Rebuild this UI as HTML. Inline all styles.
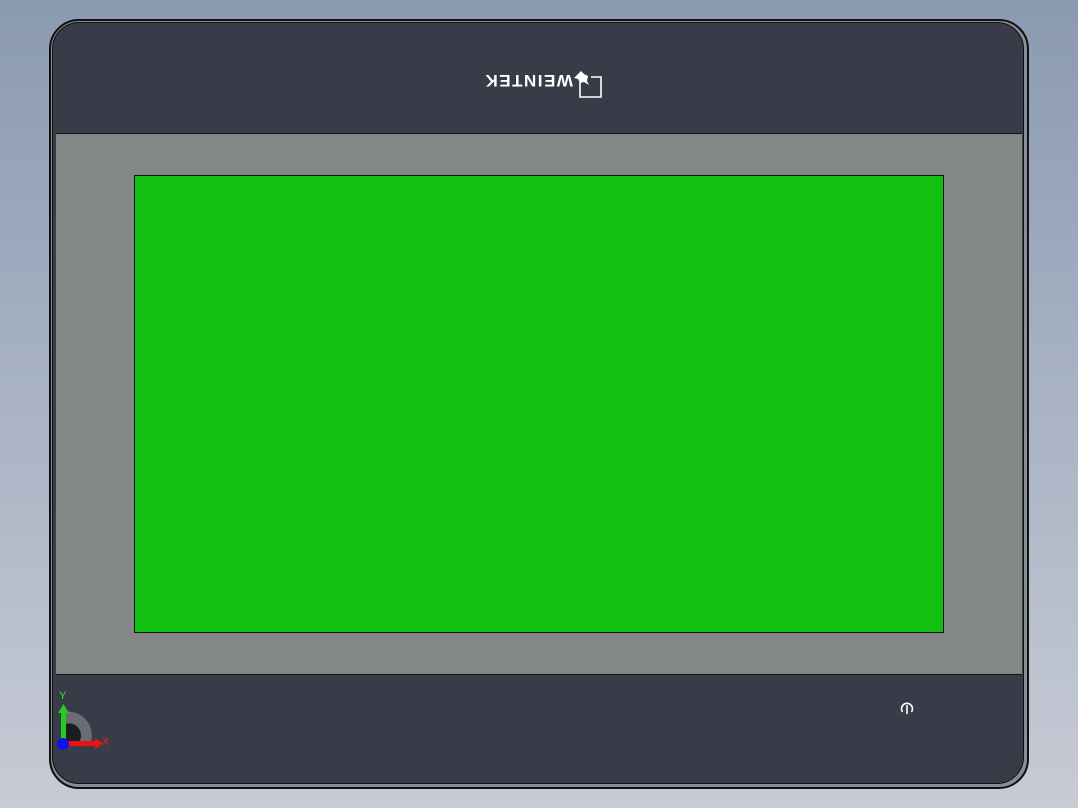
<!DOCTYPE html>
<html><head><style>
html,body{margin:0;padding:0}
body{width:1078px;height:808px;position:relative;overflow:hidden;background:linear-gradient(#8a9ab1,#a9b3c4 50%,#c7cbd5);font-family:"Liberation Sans",sans-serif}
.o{position:absolute;left:49px;top:19px;width:976px;height:766px;border:2px solid #111;border-radius:30px;background:#888d96}
.m{position:absolute;left:52px;top:22px;width:970px;height:760px;border:1px solid #111;border-radius:27px;background:#393d49}
.p{position:absolute;left:56px;top:25px;width:966px;height:758px;border-radius:24px;background:#383c48;overflow:hidden}
.g{position:absolute;left:0;top:108px;width:966px;height:540px;background:#838785;border-top:1px solid #111;border-bottom:1px solid #111}
.s{position:absolute;left:134px;top:175px;width:808px;height:456px;background:#12c012;border:1px solid #111}
.t{position:absolute;left:484px;top:71px;font-size:17px;font-weight:bold;color:#fff;transform:rotate(180deg);letter-spacing:1.5px;line-height:18px}
</style></head><body>
<div class="o"></div><div class="m"></div>
<div class="p"><div class="g"></div></div>
<div class="s"></div>
<div class="t">WEINTEK</div>
<svg style="position:absolute;left:570px;top:68px" width="36" height="32"><path d="M4 10 L11 3 L14 6 L18 8 L17 13 L19 17 L14 14 L10 15 L8 11 Z" fill="#fff"/><path d="M10 14 V29 H31 V9 H21" fill="none" stroke="#fff" stroke-width="1.6"/></svg>
<svg style="position:absolute;left:895px;top:697px" width="24" height="22"><path d="M7.5 15 A5.5 5.5 0 1 1 16.5 15" fill="none" stroke="#fff" stroke-width="1.6"/><path d="M12 8 V17" stroke="#fff" stroke-width="1.6"/></svg>
<svg style="position:absolute;left:52px;top:685px" width="70" height="70">
<path d="M11 27 A24 24 0 0 1 39 57 L27 57 A12 12 0 0 0 11 40 Z" fill="#6a6d73"/>
<path d="M11 40 A12 12 0 0 1 27 57 L11 57Z" fill="#1c1d22"/>
<text x="7" y="14" font-size="11" fill="#2e2" font-family="Liberation Sans">Y</text>
<text x="50" y="60" font-size="11" fill="#e22" font-family="Liberation Sans">X</text>
<rect x="9" y="26" width="5" height="30" fill="#2c2"/><path d="M6 28 L11.5 19 L17 28Z" fill="#2c2"/>
<rect x="12" y="56" width="33" height="5" fill="#e11"/><path d="M43 53 L51 58.5 L43 64Z" fill="#e11"/>
<circle cx="11" cy="59" r="6" fill="#11e"/>
</svg>
</body></html>
